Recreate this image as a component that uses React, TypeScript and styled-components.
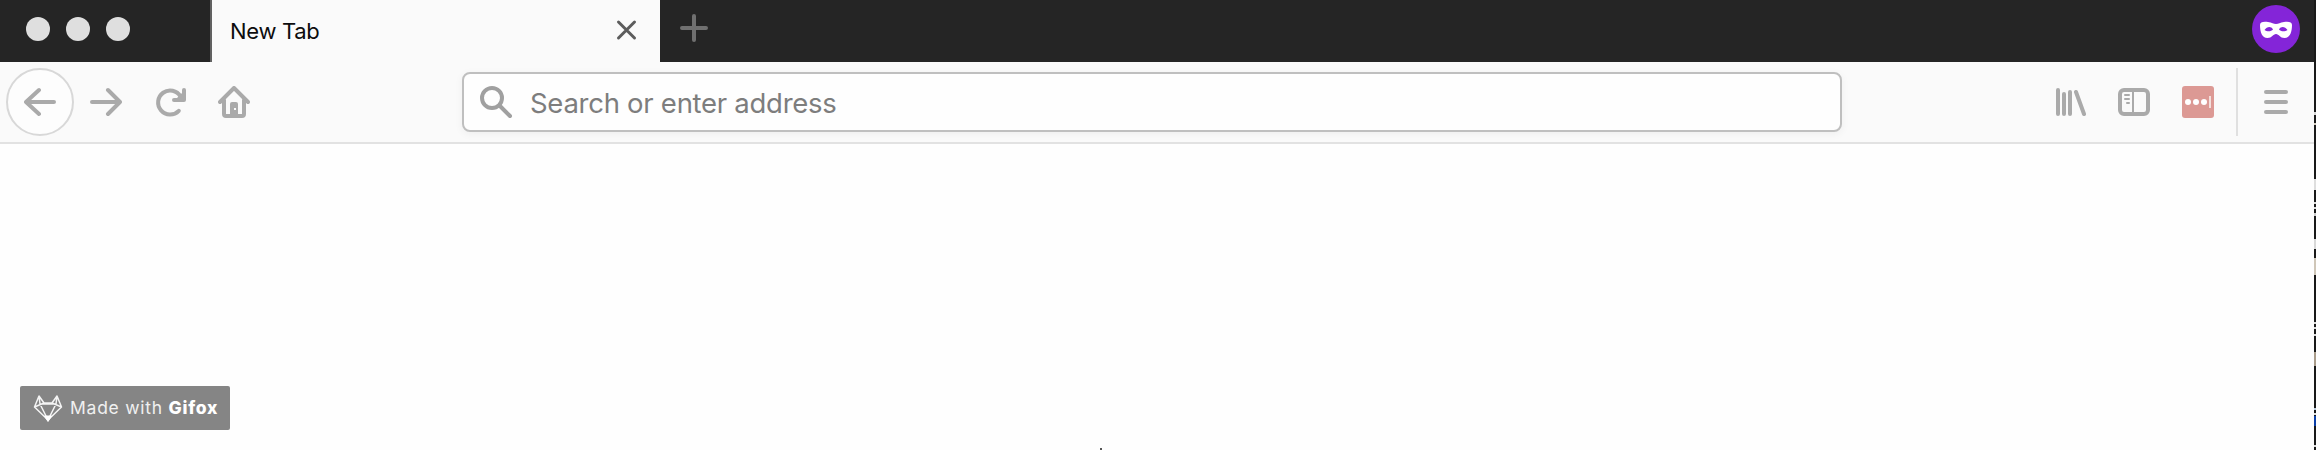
import React from "react";
import styled, { createGlobalStyle } from "styled-components";

const GlobalStyle = createGlobalStyle`
  * { box-sizing: border-box; }
  html, body { margin: 0; padding: 0; }
  body { font-family: Inter, "Liberation Sans", sans-serif; background: #fefefe; overflow: hidden; }
  svg { display: block; flex: none; }
`;

const Screen = styled.div`
  display: flex;
  width: 2316px;
  height: 450px;
  overflow: hidden;
`;

const Browser = styled.div`
  display: flex;
  flex-direction: column;
  width: 2314px;
  flex: none;
`;

const Desktop = styled.div`
  display: flex;
  flex-direction: column;
  width: 2px;
  height: 450px;
  background: #191919;
`;

const Fleck = styled.div<{ $gap: number; $size: number; $color: string }>`
  flex: none;
  margin-top: ${(p) => p.$gap}px;
  height: ${(p) => p.$size}px;
  background: ${(p) => p.$color};
`;

const TabStrip = styled.div`
  display: flex;
  height: 62px;
  flex: none;
  background: #252525;
`;

const WindowControls = styled.div`
  display: flex;
  gap: 16px;
  width: 212px;
  padding: 17px 0 0 26px;
  border-right: 2px solid #616161;
`;

const Dot = styled.span`
  width: 24px;
  height: 24px;
  border-radius: 50%;
  background: #dfdfdf;
`;

const Tab = styled.div`
  display: flex;
  justify-content: space-between;
  align-items: center;
  width: 448px;
  padding: 0 22px 3px 18px;
  background: #fafafa;
`;

const TabTitle = styled.span`
  font-size: 22px;
  line-height: 30px;
  letter-spacing: -0.3px;
  color: #0c0c0d;
  padding-top: 3px;
`;

const NewTab = styled.div`
  padding: 13px 0 0 19px;
  flex: 1;
`;

const PrivateBadge = styled.div`
  padding: 5px 14px 0 0;
`;

const Toolbar = styled.div`
  display: flex;
  align-items: center;
  height: 82px;
  flex: none;
  padding: 0 26px 0 6px;
  background: #fafafa;
  border-bottom: 2px solid #e2e2e2;
`;

const BackButton = styled.div`
  display: flex;
  align-items: center;
  justify-content: center;
  width: 68px;
  height: 68px;
  border: 2px solid #d8d8d8;
  border-radius: 50%;
  background: #fdfdfd;
`;

const NavIcon = styled.div<{ $gap: number }>`
  margin-left: ${(p) => p.$gap}px;
`;

const AddressBar = styled.div`
  display: flex;
  align-items: center;
  width: 1380px;
  height: 60px;
  margin-left: 212px;
  padding-left: 14px;
  border: 2px solid #bfbfbf;
  border-radius: 8px;
  background: #fefefe;
  box-shadow: 0 2px 8px rgba(0, 0, 0, 0.05);
`;

const Placeholder = styled.span`
  margin-left: 16px;
  padding-top: 2px;
  font-size: 27.5px;
  letter-spacing: -0.27px;
  line-height: 36px;
  white-space: nowrap;
  color: #7d7d7d;
`;

const Actions = styled.div`
  display: flex;
  align-items: center;
  gap: 32px;
  margin-left: 212px;
`;

const Divider = styled.div`
  width: 2px;
  height: 68px;
  margin: 0 26px 0 22px;
  background: #e0e0e0;
`;

const Page = styled.div`
  display: flex;
  flex-direction: column;
  justify-content: space-between;
  flex: 1;
  padding: 242px 0 0 20px;
  background: #fefefe;
`;

const GifoxBadge = styled.div`
  display: flex;
  align-items: center;
  width: 210px;
  height: 44px;
  flex: none;
  padding-left: 13px;
  border-radius: 2px;
  background: #858585;
`;

const BadgeText = styled.span`
  margin-left: 7px;
  font-size: 17.5px;
  letter-spacing: 0.75px;
  line-height: 22px;
  white-space: nowrap;
  color: #f0f0f0;
  b { font-weight: 800; color: #fff; }
`;

const Speck = styled.div`
  width: 2px;
  height: 2px;
  margin-left: 1080px;
  background: #555;
`;

const stroke = { fill: "none", stroke: "#aaaaaa", strokeWidth: 4, strokeLinecap: "round", strokeLinejoin: "round" } as const;

const flecks: [number, number, string][] = [
  [112, 3, "#d8d8d8"], [8, 2, "#d5cdc0"], [54, 11, "#dedede"], [12, 2, "#ddd"],
  [3, 2, "#ddd"], [4, 3, "#ccc"], [23, 10, "#d8d8d8"], [9, 17, "#cfc6b8"],
  [47, 2, "#ddd"], [3, 2, "#ddd"], [5, 2, "#ddd"], [16, 14, "#a99c8b"],
  [42, 2, "#bcd"], [3, 2, "#ddd"], [1, 10, "#0b3fa8"], [19, 2, "#ddd"], [4, 3, "#ddd"],
];

export default function App() {
  return (
    <>
      <GlobalStyle />
      <Screen>
        <Browser>
          <TabStrip>
            <WindowControls><Dot /><Dot /><Dot /></WindowControls>
            <Tab>
              <TabTitle>New Tab</TabTitle>
              <svg width="22" height="22" viewBox="0 0 22 22">
                <path d="M2.500 3 18.500 19M18.500 3 2.500 19" fill="none" stroke="#5c5c5c" strokeWidth="3" strokeLinecap="round" />
              </svg>
            </Tab>
            <NewTab>
              <svg width="30" height="30" viewBox="0 0 30 30">
                <path d="M15 3V27M3 15H27" fill="none" stroke="#707070" strokeWidth="4" strokeLinecap="round" />
              </svg>
            </NewTab>
            <PrivateBadge>
              <svg width="48" height="48" viewBox="0 0 48 48">
                <circle cx="24" cy="24" r="24" fill="#8425d8" />
                <path fillRule="evenodd" fill="#fff" d="M8 20C8 17 11 16.500 16 17C20 17.500 21.500 19 24 19C26.500 19 28 17.500 32 17C37 16.500 40 17 40 20C40 27 38 33 32.500 33C28 33 27 29 24 29C21 29 20 33 15.500 33C10 33 8 27 8 20ZM12.500 25C14.500 26.500 19 27 21 24.500C19 21 15 21.500 12.500 25ZM35.500 25C33.500 26.500 29 27 27 24.500C29 21 33 21.500 35.500 25Z" />
              </svg>
            </PrivateBadge>
          </TabStrip>
          <Toolbar>
            <BackButton>
              <svg width="32" height="32" viewBox="0 0 32 32"><path {...stroke} d="M2 16H30M15 4 2 16 15 28" /></svg>
            </BackButton>
            <NavIcon $gap={16}>
              <svg width="32" height="32" viewBox="0 0 32 32"><path {...stroke} d="M2 16H30M18 4 30 16 18 28" /></svg>
            </NavIcon>
            <NavIcon $gap={32}>
              <svg width="32" height="32" viewBox="0 0 32 32">
                <path {...stroke} d="M24.800 24.800A12 12 0 1 1 26.500 10.500M30 4V14H20" />
                <path d="M23 12 30 5V14H21Z" fill="#aaaaaa" />
              </svg>
            </NavIcon>
            <NavIcon $gap={32}>
              <svg width="32" height="32" viewBox="0 0 32 32">
                <path {...stroke} d="M2 16 16 2 30 16M6 14V28Q6 30 8 30H24Q26 30 26 28V14" />
                <path fillRule="evenodd" fill="#aaaaaa" d="M12 31V18Q12 16 14 16H18Q20 16 20 18V31ZM16 22V24H18V22Z" />
              </svg>
            </NavIcon>
            <AddressBar>
              <svg width="36" height="36" viewBox="0 0 36 36">
                <circle cx="14" cy="14" r="10" fill="none" stroke="#a0a0a0" strokeWidth="4" />
                <path d="M21.500 21.500 32 32" fill="none" stroke="#a0a0a0" strokeWidth="4" strokeLinecap="round" />
              </svg>
              <Placeholder>Search or enter address</Placeholder>
            </AddressBar>
            <Actions>
              <svg width="32" height="32" viewBox="0 0 32 32">
                <path {...stroke} d="M4 4V28M10 8V28M16 6V28M22 6 30 28" />
              </svg>
              <svg width="32" height="32" viewBox="0 0 32 32">
                <rect {...stroke} x="2" y="4" width="28" height="24" rx="4" />
                <path {...stroke} strokeWidth="2" strokeLinecap="butt" d="M15 4V28" />
                <path {...stroke} strokeWidth="2" d="M7 9H11M7 13H11M9 17H11" />
              </svg>
              <svg width="32" height="32" viewBox="0 0 32 32">
                <rect width="32" height="32" rx="3" fill="#dc9994" />
                <circle cx="6" cy="16" r="3" fill="#fff" />
                <circle cx="14" cy="16" r="3" fill="#fff" />
                <circle cx="22" cy="16" r="3" fill="#fff" />
                <path d="M28 10V22" stroke="#f3dfdc" strokeWidth="2" />
              </svg>
            </Actions>
            <Divider />
            <svg width="24" height="24" viewBox="0 0 24 24"><path {...stroke} d="M2 2H22M2 12H22M2 22H22" /></svg>
          </Toolbar>
          <Page>
            <GifoxBadge>
              <svg width="30" height="28" viewBox="0 0 30 28">
                <path d="M6 2 1.500 13 15 26 28.500 13 24 2 19 9H11ZM11 9 1.500 13M19 9 28.500 13M6 2 7 10 15 26 23 10 24 2M7 10H23" fill="none" stroke="#f4f4f4" strokeWidth="1.500" strokeLinejoin="round" />
                <path d="M11.500 22H18.500L15 27.500Z" fill="#fff" stroke="#fff" />
              </svg>
              <BadgeText>Made with <b>Gifox</b></BadgeText>
            </GifoxBadge>
            <Speck />
          </Page>
        </Browser>
        <Desktop>
          {flecks.map(([gap, size, color], i) => <Fleck key={i} $gap={gap} $size={size} $color={color} />)}
        </Desktop>
      </Screen>
    </>
  );
}
